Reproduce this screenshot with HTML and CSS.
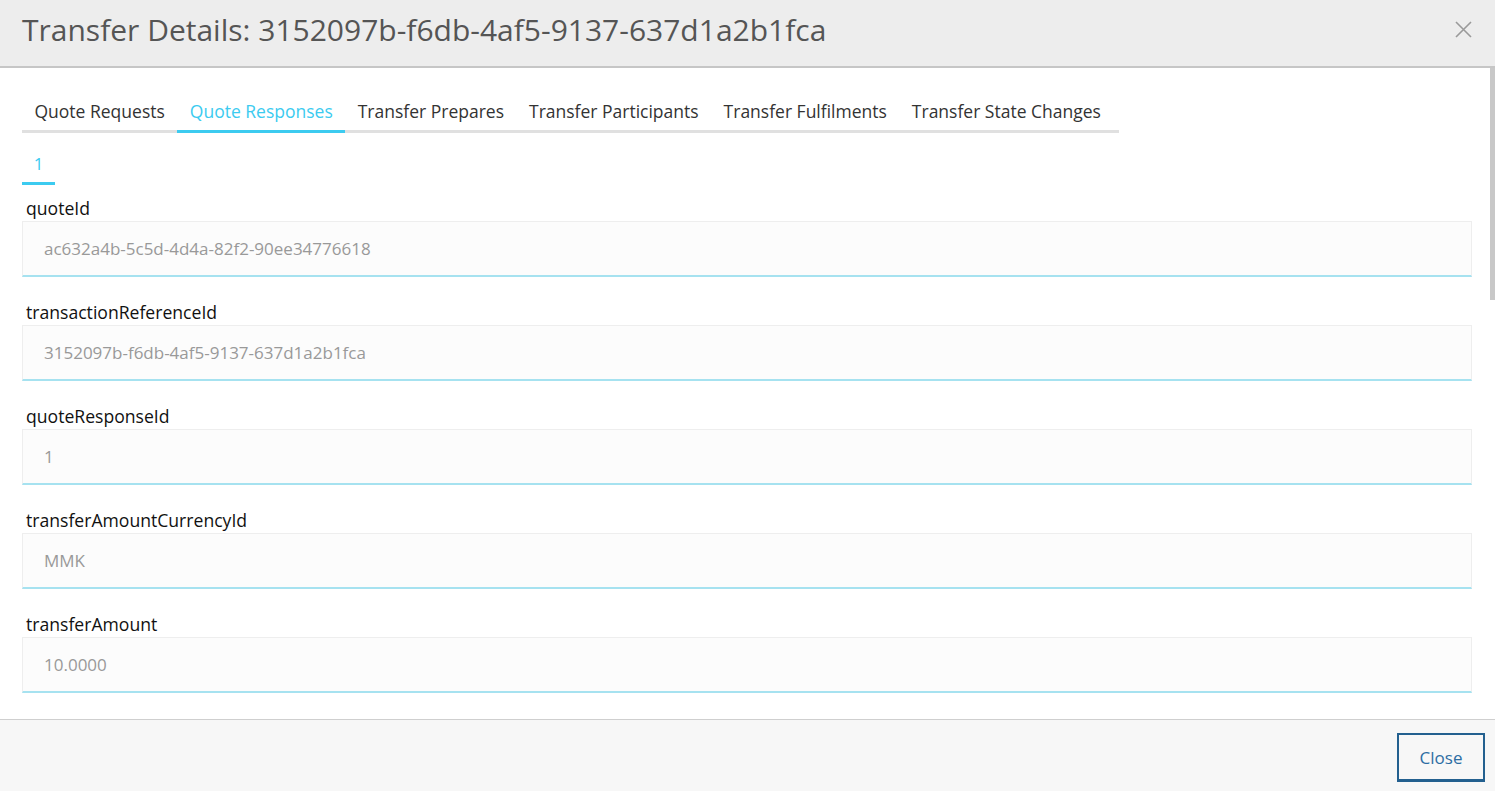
FILE: index.html
```html
<!DOCTYPE html>
<html lang="en">
<head>
  <meta charset="UTF-8">
  <meta name="viewport" content="width=device-width, initial-scale=1.0">
  <title>Transfer Details</title>
  <link rel="stylesheet" href="styles.css">
</head>
<body>
  <div class="modal">
    <div class="modal-header">
      <h1>Transfer Details: 3152097b-f6db-4af5-9137-637d1a2b1fca</h1>
      <span class="close-x">
        <svg width="17" height="17" viewBox="0 0 17 17">
          <path d="M1 1 L16 16 M16 1 L1 16" stroke="#9a9a9a" stroke-width="1.6" fill="none"/>
        </svg>
      </span>
    </div>

    <div class="modal-body">
      <div class="tabs">
        <div class="tab">Quote Requests</div>
        <div class="tab active">Quote Responses</div>
        <div class="tab">Transfer Prepares</div>
        <div class="tab">Transfer Participants</div>
        <div class="tab">Transfer Fulfilments</div>
        <div class="tab">Transfer State Changes</div>
      </div>

      <div class="subtabs">
        <div class="subtab active">1</div>
      </div>

      <div class="field">
        <label>quoteId</label>
        <div class="input">ac632a4b-5c5d-4d4a-82f2-90ee34776618</div>
      </div>
      <div class="field">
        <label>transactionReferenceId</label>
        <div class="input">3152097b-f6db-4af5-9137-637d1a2b1fca</div>
      </div>
      <div class="field">
        <label>quoteResponseId</label>
        <div class="input">1</div>
      </div>
      <div class="field">
        <label>transferAmountCurrencyId</label>
        <div class="input">MMK</div>
      </div>
      <div class="field">
        <label>transferAmount</label>
        <div class="input">10.0000</div>
      </div>

      <div class="scroll-thumb"></div>
    </div>

    <div class="modal-footer">
      <button class="btn-close">Close</button>
    </div>
  </div>
</body>
</html>
```

FILE: styles.css
```css
html, body {
  margin: 0;
  height: 100%;
}
body {
  font-family: "Open Sans", "Noto Sans", sans-serif;
  background: #fff;
  overflow: hidden;
}
.modal {
  height: 100vh;
  display: flex;
  flex-direction: column;
}
.modal-header {
  height: 66px;
  flex-shrink: 0;
  background-color: #ededed;
  border-bottom: 2px solid #c6c6c6;
  display: flex;
  align-items: center;
  justify-content: space-between;
  padding: 0 23px 0 22px;
}
.modal-header h1 {
  margin: 0;
  font-size: 30px;
  font-weight: 400;
  color: #555;
  position: relative;
  top: -4px;
}
.close-x {
  display: flex;
  position: relative;
  top: -4px;
}
.modal-body {
  flex: 1;
  overflow: hidden;
  position: relative;
  padding: 27px 23px 0 22px;
}
.scroll-thumb {
  position: absolute;
  top: 0;
  right: 0;
  width: 5px;
  height: 232px;
  background: #c8c8c8;
}
.tabs {
  display: flex;
  width: 1097px;
  border-bottom: 3px solid #e0e0e0;
}
.tab {
  flex-shrink: 0;
  white-space: nowrap;
  padding: 0 12.5px;
  height: 35px;
  line-height: 33px;
  font-size: 17.5px;
  color: #333;
  margin-bottom: -3px;
  border-bottom: 3px solid transparent;
}
.tab.active {
  color: #3ccbf0;
  border-bottom-color: #3ccbf0;
}
.subtabs {
  display: flex;
  margin-top: 17px;
  margin-bottom: 12px;
}
.subtab {
  width: 33px;
  text-align: center;
  height: 32px;
  line-height: 28px;
  font-size: 17px;
  color: #3ccbf0;
  border-bottom: 3px solid #3ccbf0;
}
.field {
  margin-bottom: 24px;
}
.field label {
  display: block;
  height: 24px;
  line-height: 22px;
  padding-left: 4px;
  font-size: 17.6px;
  color: #111;
}
.input {
  height: 53px;
  line-height: 53px;
  background-color: #fcfcfc;
  border: 1px solid #eee;
  border-bottom: 2px solid #a6e2f0;
  padding-left: 21px;
  font-size: 17px;
  color: #999;
}
.modal-footer {
  height: 72px;
  flex-shrink: 0;
  background-color: #f7f7f7;
  border-top: 1px solid #cfcfcf;
  display: flex;
  justify-content: flex-end;
  align-items: flex-start;
  padding: 13px 10px 0 0;
  box-sizing: border-box;
}
.btn-close {
  width: 88px;
  height: 49px;
  background: #f7f7f7;
  border: 2px solid #23608f;
  border-bottom-width: 3px;
  color: #2c6da3;
  font-family: "Open Sans", "Noto Sans", sans-serif;
  font-size: 17px;
  padding: 0;
}
```
